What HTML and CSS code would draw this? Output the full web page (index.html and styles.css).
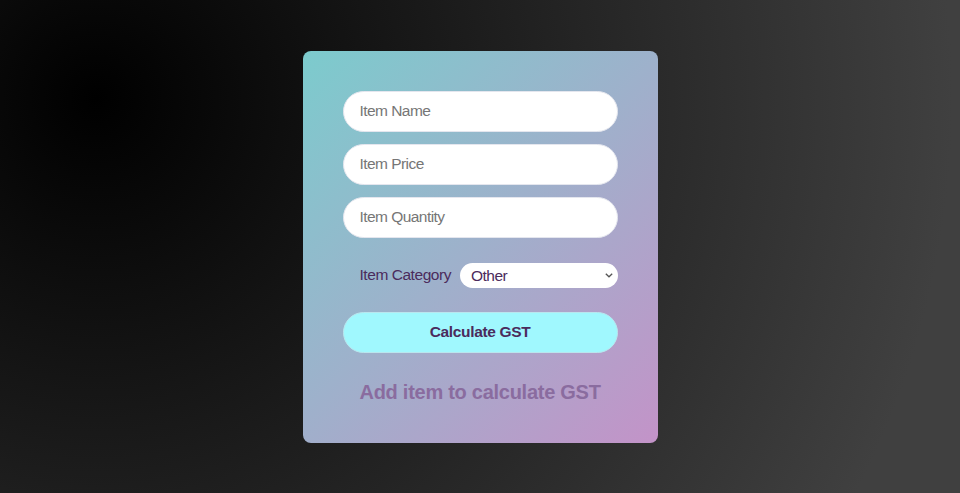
FILE: index.html
```html
<!DOCTYPE html>
<html lang="en">
<head>
<meta charset="utf-8">
<title>GST Calculator</title>
<link rel="stylesheet" href="styles.css">
</head>
<body>
  <div class="card">
    <input class="field" type="text" placeholder="Item Name">
    <input class="field" type="text" placeholder="Item Price">
    <input class="field" type="text" placeholder="Item Quantity">
    <div class="category">
      <label class="category-label" for="cat">Item Category</label>
      <div class="select-wrap">
        <select id="cat" class="category-select">
          <option>Other</option>
        </select>
        <svg class="chevron" width="8" height="5" viewBox="0 0 8 5" aria-hidden="true">
          <path d="M0.8 0.8 L4 3.8 L7.2 0.8" fill="none" stroke="#555" stroke-width="1.3"/>
        </svg>
      </div>
    </div>
    <button class="calc-btn" type="button">Calculate GST</button>
    <p class="result">Add item to calculate GST</p>
  </div>
</body>
</html>
```

FILE: styles.css
```css
* { box-sizing: border-box; }

html, body {
  margin: 0;
  height: 100%;
}

body {
  font-family: "Liberation Sans", Arial, sans-serif;
  background: radial-gradient(circle farthest-corner at 10% 20%, rgb(0,0,0) 0%, rgb(64,64,64) 90.2%);
  display: flex;
  align-items: center;
  justify-content: center;
}

.card {
  width: 355px;
  padding: 40px 40px 39px;
  border-radius: 8px;
  background: linear-gradient(135deg, #7ccbcd 0%, #9fb0cb 50%, #c393c8 100%);
  display: flex;
  flex-direction: column;
}

.field {
  height: 41px;
  width: 100%;
  border: 1px solid #e4e6ee;
  border-radius: 21px;
  background: #fff;
  padding: 0 16px;
  font-family: "Liberation Sans", Arial, sans-serif;
  font-size: 15.5px;
  letter-spacing: -0.55px;
  color: #333;
  margin-bottom: 12px;
  outline: none;
}

.field::placeholder { color: #767676; }

.category {
  display: flex;
  align-items: center;
  margin-top: 13px;
  padding-left: 17px;
  height: 25px;
}

.category-label {
  font-size: 15.5px;
  letter-spacing: -0.45px;
  color: #4b2b5c;
  margin-right: 9px;
}

.select-wrap {
  flex: 1;
  position: relative;
  height: 25px;
}

.category-select {
  -webkit-appearance: none;
  appearance: none;
  width: 100%;
  height: 25px;
  border: none;
  border-radius: 13px;
  background: #fff;
  font-family: "Liberation Sans", Arial, sans-serif;
  font-size: 15.5px;
  letter-spacing: -0.5px;
  color: #4b2b5c;
  padding: 0 20px 0 11px;
  outline: none;
}

.chevron {
  position: absolute;
  right: 5px;
  top: 10px;
  pointer-events: none;
}

.calc-btn {
  margin-top: 24px;
  height: 41px;
  width: 100%;
  border: 1px solid #b9e6ee;
  border-radius: 21px;
  background: #a0f8fe;
  font-family: "Liberation Sans", Arial, sans-serif;
  font-size: 15.5px;
  letter-spacing: -0.35px;
  font-weight: bold;
  color: #4b2b5c;
  cursor: pointer;
}

.result {
  margin: 28px 0 0;
  padding-left: 17px;
  font-size: 20px;
  line-height: 23px;
  letter-spacing: -0.27px;
  font-weight: bold;
  color: #8a6c9f;
}
```
